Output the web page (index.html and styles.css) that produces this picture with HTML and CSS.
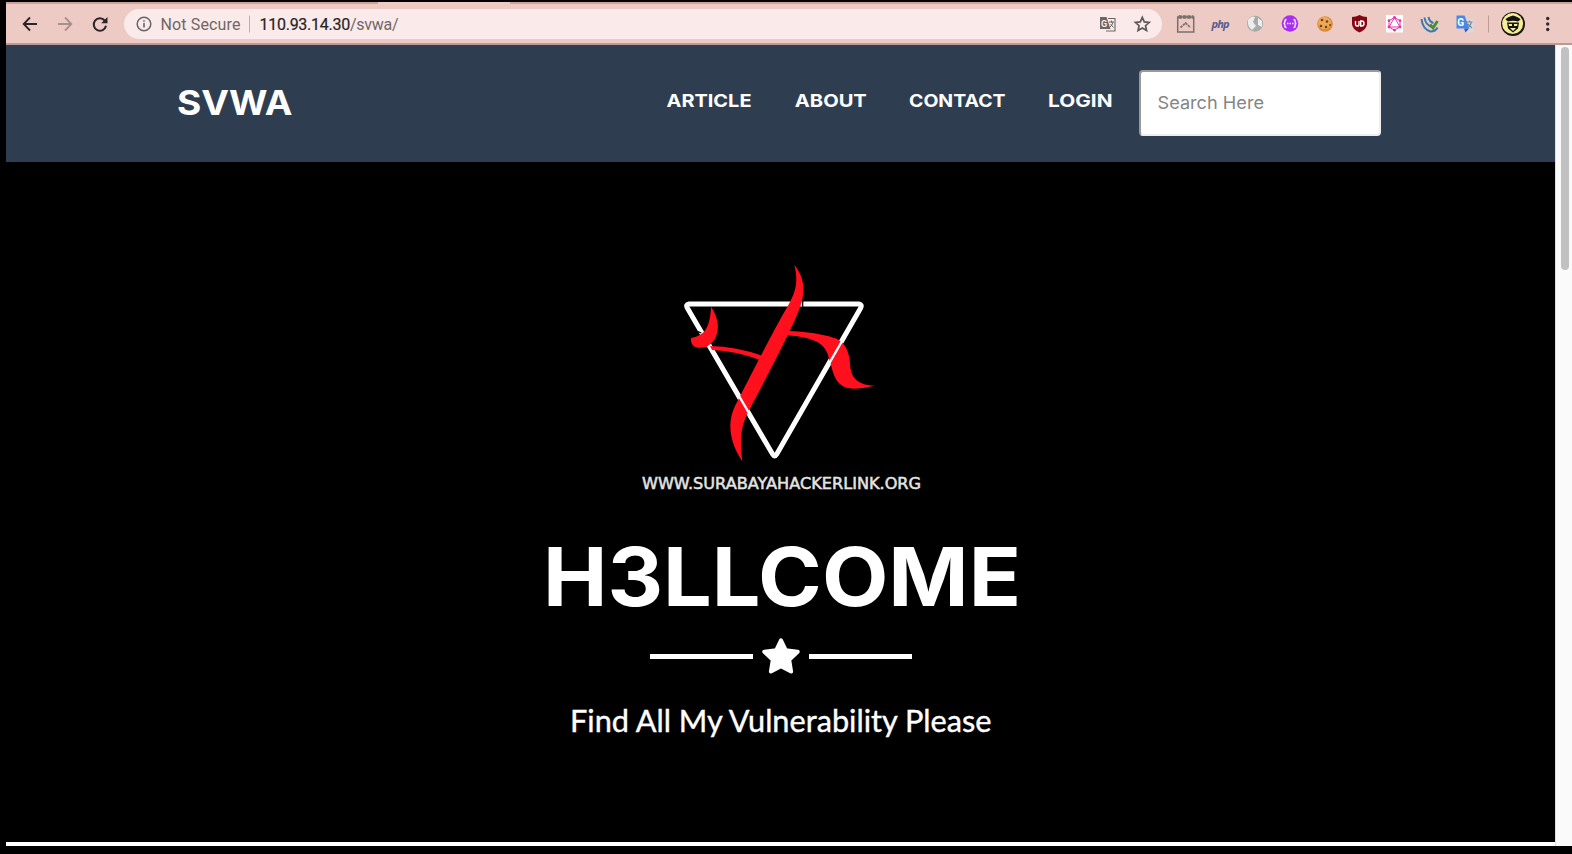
FILE: index.html
```html
<!DOCTYPE html>
<html lang="en">
<head>
<meta charset="utf-8">
<title>SVWA</title>
<link rel="stylesheet" href="styles.css">
</head>
<body>
<div class="window">
  <header class="toolbar">
    <svg class="controls" width="118" height="42" viewBox="6 2 118 42" fill="none" stroke-width="1.8">
      <path stroke="#2b2526" d="M37 24H24M30 17.5L23.7 24l6.3 6.5"/>
      <path stroke="#a78f8c" d="M58 24h13M65 17.5l6.3 6.5-6.3 6.5"/>
      <path stroke="#2b2526" stroke-width="2" d="M104.7 20.5A6.2 6.2 0 1 0 106 25.8"/>
      <path fill="#2b2526" d="M107.5 17v6.3h-6.3z"/>
    </svg>
    <div class="address">
      <svg class="info" width="16" height="16" viewBox="0 0 16 16"><circle cx="8" cy="8" r="6.8" fill="none" stroke="#6b6264" stroke-width="1.5"/><path fill="#6b6264" d="M7.2 7h1.6v4.6H7.2zM7.2 4.2h1.6v1.6H7.2z"/></svg>
      <svg class="address-text" width="250" height="30" viewBox="156 9 250 30">
        <text class="muted" x="160.500" y="29.500" textLength="80">Not Secure</text>
        <path stroke="#bdb0b0" d="M249.5 15.500v17"/>
        <text x="259.500" y="29.500" textLength="139"><tspan class="host">110.93.14.30</tspan><tspan class="muted">/svwa/</tspan></text>
      </svg>
      <svg class="page-actions" width="62" height="30" viewBox="1096 9 62 30">
        <path fill="none" stroke="#6d6666" stroke-width="1.1" d="M1108 18.500h7v12.500h-9"/>
        <path fill="#6d6666" d="M1100 17h6.500l4 12h-10.500z"/>
        <text class="g-light" x="1101" y="26.5">G</text>
        <path fill="none" stroke="#6d6666" d="M1109 22h5M1111.500 20.500v2M1113 22q-1 4-3 5M1110.500 24l3 3.500"/>
        <path fill="none" stroke="#5f595a" stroke-width="1.700" d="M1142.300 17.400l2 4.500 4.900.5-3.700 3.300 1.100 4.900-4.300-2.500-4.300 2.500 1.100-4.900-3.700-3.300 4.900-.5z"/>
      </svg>
    </div>
    <svg class="extensions" width="410" height="42" viewBox="1162 2 410 42">
      <g fill="none" stroke="#77706b" stroke-width="1.500"><rect x="1177.700" y="17" width="16" height="15"/><path stroke-width="3.500" stroke-dasharray="3.400 1" d="M1178.500 17h15"/><path stroke-width="1.700" stroke-dasharray="2.500 .8" d="M1180.500 27.500l5-4.500 5 4.500"/></g>
      <text class="php" x="1211.500" y="27.500" textLength="18">php</text>
      <circle cx="1255" cy="23.700" r="8" fill="#a9aaa8"/><path fill="#eceeed" d="M1248 20q4-5 7-3l-2 5 3 4-4 4q-5-4-4-10zM1258 18l4 3v6l-4-2z"/>
      <circle cx="1290" cy="23.500" r="8.300" fill="#a62ff0"/><path fill="none" stroke="#fff" stroke-width="1.300" d="M1286.500 19.500q-2 0-1.500 2 0 2-1.500 2 1.500 0 1.500 2-.5 2 1.500 2M1293.500 19.500q2 0 1.500 2 0 2 1.500 2-1.500 0-1.500 2 .5 2-1.500 2M1287 23.500h1.500m1 0h1.500m1 0h1.500"/>
      <circle cx="1325" cy="24" r="7.800" fill="#d98b3c"/><circle cx="1324.500" cy="23" r="6.300" fill="#eca957"/><g fill="#7a4018"><circle cx="1322" cy="20" r="1.300"/><circle cx="1327" cy="21.500" r="1.300"/><circle cx="1321" cy="26" r="1.300"/><circle cx="1326" cy="27" r="1.300"/><circle cx="1330" cy="25" r="1"/></g>
      <path fill="#850613" d="M1359.500 15q3.500 2 7.500 2v7q0 5-7.500 8.500-7.500-3.500-7.500-8.500v-7q4 0 7.500-2z"/><path fill="none" stroke="#fff" stroke-width="1.400" d="M1355.500 21v3.500q0 1.500 1.800 1.500t1.700-1.500V21M1360.700 21v5h1q2.300 0 2.300-2.500t-2.300-2.500z"/>
      <path fill="#fff" d="M1386 15h17v17.500h-17z"/><g fill="none" stroke="#e535ab"><path d="M1394.500 17.500l5.500 3.200v6.300l-5.500 3.200-5.500-3.200v-6.300zM1394.500 17.500l5.500 9.500h-11z"/></g><g fill="#e535ab"><circle cx="1394.500" cy="17.500" r="1.400"/><circle cx="1400" cy="20.700" r="1.400"/><circle cx="1400" cy="27" r="1.400"/><circle cx="1394.500" cy="30.200" r="1.400"/><circle cx="1389" cy="27" r="1.400"/><circle cx="1389" cy="20.700" r="1.400"/></g>
      <g fill="none" stroke="#367bb0" stroke-width="2"><path d="M1421.500 19q1 10 9 12.500 5 0 7-4"/><path d="M1424.500 17.500q1 8 8 9.500M1428.500 17q1 5 5 6"/></g><path fill="none" stroke="#458f31" stroke-width="2.800" d="M1430 24.500l3 3.500 4.500-7"/>
      <path fill="#d8dadd" d="M1463 19h10v13.500h-8z"/><path fill="#4488ec" d="M1456.500 15.500h8l5 13h-13z"/><path fill="#3457bd" d="M1464 28.500h5l-3.500 4z"/><text class="g-blue" x="1457.300" y="25.500">G</text><path fill="none" stroke="#788c96" stroke-width="1.100" d="M1466.500 22h6M1469.500 20.500v2M1471.500 22q-1 4-3 5M1468 24l4 4"/>
      <path stroke="#b99d98" d="M1488.500 15.500v17"/>
      <circle cx="1513" cy="24" r="12" fill="#1a1711"/><circle cx="1512.600" cy="23.600" r="10.500" fill="#f5ed98"/><path fill="#15140f" d="M1505.500 19.500q1-2 7.500-4 6.500 2 7.500 4l-2.500 2q-5-1.500-10 0zM1507 22.500h12l-1 6-5 4-5-4z"/><path fill="#f5ed98" d="M1508.500 24h3.500v2h-3zM1514 24h3.500l-.5 2h-3zM1510 28h6l-3 3z"/>
      <g fill="#302829"><circle cx="1547.700" cy="18.500" r="1.700"/><circle cx="1547.700" cy="24" r="1.700"/><circle cx="1547.700" cy="29.500" r="1.700"/></g>
    </svg>
  </header>
  <div class="viewport">
    <main class="page">
      <nav class="navbar">
        <svg class="brand" width="130" height="60" viewBox="172 74 130 60"><text x="177" y="115.300" textLength="115.500" lengthAdjust="spacingAndGlyphs">SVWA</text></svg>
        <svg class="links" width="460" height="40" viewBox="660 81 460 40">
          <text x="666.500" y="107" textLength="85" lengthAdjust="spacingAndGlyphs">ARTICLE</text>
          <text x="794.800" y="107" textLength="72" lengthAdjust="spacingAndGlyphs">ABOUT</text>
          <text x="909" y="107" textLength="96.500" lengthAdjust="spacingAndGlyphs">CONTACT</text>
          <text x="1048" y="107" textLength="64.500" lengthAdjust="spacingAndGlyphs">LOGIN</text>
        </svg>
        <div class="search"><svg width="120" height="40" viewBox="1152 83 120 40"><text x="1157.500" y="109" textLength="106.500" lengthAdjust="spacingAndGlyphs">Search Here</text></svg></div>
      </nav>
      <section class="hero">
        <svg class="emblem" width="283" height="250" viewBox="-63 0 849 750">
          <path fill="none" stroke="#fff" stroke-width="15" stroke-linejoin="round" d="M87 162H597Q607 164 602 174L350 613Q344 623 338 613L82 174Q76 164 87 162z"/>
          <g fill="#ff101c">
            <path d="M150 288Q230 290 306 317L300 330Q230 303 156 300z"/>
            <path d="M380 242Q470 245 530 266Q566 284 570 340Q570 407 644 407Q610 416 580 416C520 414 520 360 508 330C500 290 480 262 378 256z"/>
            <path d="M403 44C432 83 440 120 417 180C390 250 310 400 268 480C240 530 240 570 247 634C210 580 200 520 224 470C260 400 330 260 388 160C410 120 414 90 403 44z"/>
            <path d="M153 170C186 217 178 270 140 290C112 299 90 290 93 264C130 256 150 240 153 170z"/>
          </g>
          <path stroke="#000" stroke-width="4" d="M428 152v18M124 249l-10-4"/>
          <path stroke="#fff" stroke-width="7" d="M236 436l32 55M548 270l-42 73"/>
          <text x="-54" y="717" textLength="837" lengthAdjust="spacingAndGlyphs">WWW.SURABAYAHACKERLINK.ORG</text>
        </svg>
        <svg class="title" width="500" height="110" viewBox="530 520 500 110"><text x="542" y="605.500" textLength="478" lengthAdjust="spacingAndGlyphs">H3LLCOME</text></svg>
        <div class="divider">
          <span class="rule"></span>
          <svg width="38" height="36" viewBox="0 0 38 36"><path fill="#fff" stroke="#fff" stroke-width="4" stroke-linejoin="round" d="M19 2.300l4.700 9.900 12 1.500-8.500 8 1.900 11.800-10.100-5.300-10.100 5.300 1.900-11.800-8.500-8 12-1.500z"/></svg>
          <span class="rule"></span>
        </div>
        <svg class="subtitle" width="430" height="44" viewBox="566 700 430 44"><text x="570" y="731.500" textLength="421.500" lengthAdjust="spacingAndGlyphs">Find All My Vulnerability Please</text></svg>
      </section>
    </main>
    <aside class="scrollbar"><div class="thumb"></div></aside>
  </div>
</div>
</body>
</html>
```
FILE: styles.css
```css
* { box-sizing: border-box; }
body { margin: 0; background: #000; overflow: hidden; font-family: Inter, "Liberation Sans", sans-serif; }
svg { display: block; flex: none; }
.window { width: 1572px; height: 854px; padding: 2px 0 8px 6px; display: flex; flex-direction: column; }

.toolbar {
  height: 43px; flex: none; display: flex; align-items: flex-start;
  background:
    linear-gradient(#eecac4, #eecac4) 372px 0 / 132px 2px no-repeat,
    linear-gradient(#cfa298, #cfa298) 0 0 / 100% 2px no-repeat,
    #eecac4;
  border-bottom: 2px solid #b99a97;
}
.address { width: 1038px; height: 30px; margin-top: 7px; padding: 0 4px 0 12px; border-radius: 15px; background: #faebea; display: flex; align-items: center; }
.address-text { margin-left: 4px; font: 16px Roboto, sans-serif; }
.muted { fill: #6f6667; }
.host { fill: #282425; stroke: #282425; stroke-width: .2px; }
.page-actions { margin-left: auto; }
.g-light { font: bold 9px Roboto, sans-serif; fill: #faebea; }
.g-blue { font: bold 10px Roboto, sans-serif; fill: #fff; }
.php { font: italic bold 11px "Open Sans", sans-serif; fill: #555b91; }

.viewport { flex: 1; display: flex; min-height: 0; }
.page { width: 1549px; background: #000; border-bottom: 4px solid #fff; display: flex; flex-direction: column; }
.navbar { height: 117px; flex: none; display: flex; padding-left: 166px; background: #2e3e50; align-items: flex-start; }
.brand { margin-top: 29px; font-size: 34.500px; font-weight: 700; fill: #fff; }
.links { margin: 36px 0 0 358px; font-size: 17.700px; font-weight: 700; fill: #fff; }
.search { width: 242px; height: 66px; margin: 25px 0 0 19px; padding: 11px 0 0 11px; background: #fff; border: 2px solid; border-color: #9b9998 #eee #eee #9b9998; border-radius: 4px; }
.search text { font-size: 17.500px; fill: #858585; }

.hero { flex: 1; display: flex; flex-direction: column; align-items: center; padding-top: 88px; }
.emblem text { font: 46px "DejaVu Sans", sans-serif; fill: #e4e4e4; stroke: #e4e4e4; stroke-width: 1.5px; }
.title { margin-top: 20px; font-size: 80.500px; font-weight: 700; fill: #fff; }
.divider { margin-top: 8px; display: flex; align-items: center; gap: 9px; }
.rule { width: 103px; height: 5px; background: #fff; }
.subtitle { margin-top: 26px; font: 31px Lato, sans-serif; fill: #fff; stroke: #fff; stroke-width: .4px; }

.scrollbar { width: 17px; padding: 2px 4px 0 5px; background: #fafafa; border-left: 1px solid #dedede; }
.thumb { height: 223px; width: 8px; border-radius: 4px; background: #c1c1c1; }
```
